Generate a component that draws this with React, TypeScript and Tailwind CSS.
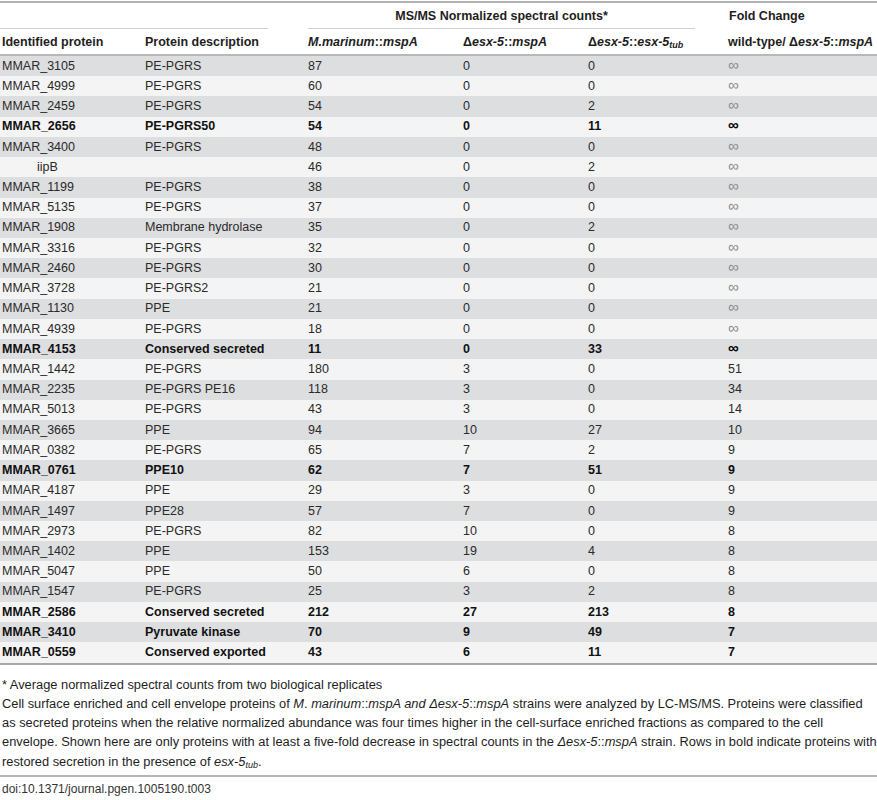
import React from "react";

type Row = [string, string, string, string, string, string, boolean];

const rows: Row[] = [
  ["MMAR_3105", "PE-PGRS", "87", "0", "0", "∞", false],
  ["MMAR_4999", "PE-PGRS", "60", "0", "0", "∞", false],
  ["MMAR_2459", "PE-PGRS", "54", "0", "2", "∞", false],
  ["MMAR_2656", "PE-PGRS50", "54", "0", "11", "∞", true],
  ["MMAR_3400", "PE-PGRS", "48", "0", "0", "∞", false],
  ["iipB", "", "46", "0", "2", "∞", false],
  ["MMAR_1199", "PE-PGRS", "38", "0", "0", "∞", false],
  ["MMAR_5135", "PE-PGRS", "37", "0", "0", "∞", false],
  ["MMAR_1908", "Membrane hydrolase", "35", "0", "2", "∞", false],
  ["MMAR_3316", "PE-PGRS", "32", "0", "0", "∞", false],
  ["MMAR_2460", "PE-PGRS", "30", "0", "0", "∞", false],
  ["MMAR_3728", "PE-PGRS2", "21", "0", "0", "∞", false],
  ["MMAR_1130", "PPE", "21", "0", "0", "∞", false],
  ["MMAR_4939", "PE-PGRS", "18", "0", "0", "∞", false],
  ["MMAR_4153", "Conserved secreted", "11", "0", "33", "∞", true],
  ["MMAR_1442", "PE-PGRS", "180", "3", "0", "51", false],
  ["MMAR_2235", "PE-PGRS PE16", "118", "3", "0", "34", false],
  ["MMAR_5013", "PE-PGRS", "43", "3", "0", "14", false],
  ["MMAR_3665", "PPE", "94", "10", "27", "10", false],
  ["MMAR_0382", "PE-PGRS", "65", "7", "2", "9", false],
  ["MMAR_0761", "PPE10", "62", "7", "51", "9", true],
  ["MMAR_4187", "PPE", "29", "3", "0", "9", false],
  ["MMAR_1497", "PPE28", "57", "7", "0", "9", false],
  ["MMAR_2973", "PE-PGRS", "82", "10", "0", "8", false],
  ["MMAR_1402", "PPE", "153", "19", "4", "8", false],
  ["MMAR_5047", "PPE", "50", "6", "0", "8", false],
  ["MMAR_1547", "PE-PGRS", "25", "3", "2", "8", false],
  ["MMAR_2586", "Conserved secreted", "212", "27", "213", "8", true],
  ["MMAR_3410", "Pyruvate kinase", "70", "9", "49", "7", true],
  ["MMAR_0559", "Conserved exported", "43", "6", "11", "7", true],
];

const grid = "grid grid-cols-[143px_163px_155px_125px_140px_1fr] pl-[2px]";

export default function App() {
  return (
    <div
      className="w-[877px] h-[800px] bg-white text-[#1e1e1e] overflow-hidden"
      style={{ fontFamily: '"Liberation Sans", Arial, sans-serif' }}
    >
      <div className="h-[2px] bg-[#b4b4b4] mt-[1px]" />
      {/* header row 1 */}
      <div className="relative h-[27px] text-[12.5px] font-bold">
        <div className="absolute left-0 top-[25px] w-[268px] h-px bg-[#cfcfcf]" />
        <div className="absolute left-[308px] top-[25px] w-[387px] h-px bg-[#cfcfcf]" />
        <div className="absolute left-[308px] w-[387px] top-[4px] text-center">
          MS/MS Normalized spectral counts*
        </div>
        <div className="absolute left-[729px] top-[4px]">Fold Change</div>
      </div>
      {/* header row 2 */}
      <div className={`${grid} h-[24px] items-center text-[12.5px] font-bold`}>
        <div>Identified protein</div>
        <div>Protein description</div>
        <div>
          <i>M.marinum</i>::<i>mspA</i>
        </div>
        <div>
          Δ<i>esx-5</i>::<i>mspA</i>
        </div>
        <div>
          Δ<i>esx-5</i>::<i>esx-5</i>
          <sub className="italic text-[9px]">tub</sub>
        </div>
        <div>
          wild-type/ Δ<i>esx-5</i>::<i>mspA</i>
        </div>
      </div>
      <div className="h-[2px] bg-[#b8b8b8]" />
      {/* body */}
      <div>
        {rows.map((r, i) => (
          <div
            key={i}
            className={`${grid} h-[20.23px] items-center text-[12.5px] ${
              i % 2 === 0 ? "bg-[#dddee0]" : "bg-[#f4f4f4]"
            } ${r[6] ? "font-bold text-[#111]" : "text-[#2a2a2a]"}`}
          >
            <div className={r[0] === "iipB" ? "pl-[35px]" : ""}>{r[0]}</div>
            <div>{r[1]}</div>
            <div>{r[2]}</div>
            <div>{r[3]}</div>
            <div>{r[4]}</div>
            <div>
              {r[5] === "∞" ? (
                r[6] ? (
                  <span className="text-[15px] leading-none font-bold text-black">∞</span>
                ) : (
                  <span
                    className="text-[15px] leading-none text-[#8a8a8a]"
                    style={{ fontFamily: '"DejaVu Sans", sans-serif', fontWeight: 200 }}
                  >
                    ∞
                  </span>
                )
              ) : (
                r[5]
              )}
            </div>
          </div>
        ))}
      </div>
      <div className="h-[2px] bg-[#a8a8a8]" />
      {/* caption */}
      <div className="pl-[2px] pt-[10px] text-[12.85px] leading-[19.3px] text-[#1e1e1e] whitespace-nowrap">
        <div>* Average normalized spectral counts from two biological replicates</div>
        <div>
          Cell surface enriched and cell envelope proteins of <i>M</i>. <i>marinum</i>::<i>mspA and Δesx-5</i>::<i>mspA</i> strains were analyzed by LC-MS/MS. Proteins were classified
        </div>
        <div>
          as secreted proteins when the relative normalized abundance was four times higher in the cell-surface enriched fractions as compared to the cell
        </div>
        <div>
          envelope. Shown here are only proteins with at least a five-fold decrease in spectral counts in the <i>Δesx-5</i>::<i>mspA</i> strain. Rows in bold indicate proteins with
        </div>
        <div>
          restored secretion in the presence of <i>esx-5</i>
          <sub className="italic text-[9px]">tub</sub>.
        </div>
      </div>
      <div className="mt-[4px] h-[2px] bg-[#b4b4b4]" />
      <div className="pl-[2px] pt-[5px] text-[12px] leading-[14px] text-[#333]">doi:10.1371/journal.pgen.1005190.t003</div>
    </div>
  );
}
